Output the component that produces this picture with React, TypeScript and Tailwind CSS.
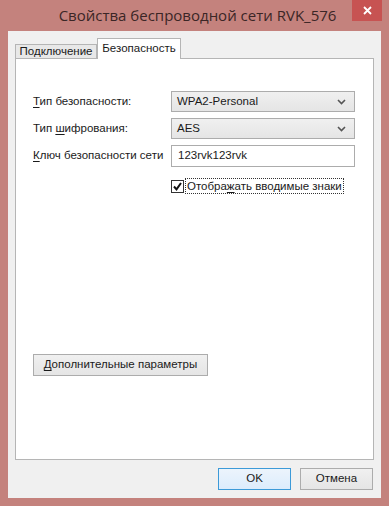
import { Fragment } from "react"

const font = { fontFamily: '"Liberation Sans", Arial, sans-serif' }

const Chevron = () => (
  <svg width="9" height="6" viewBox="0 0 9 6" className="shrink-0">
    <path d="M1 1l3.5 3.5L8 1" fill="none" stroke="#555" strokeWidth="1.6" />
  </svg>
)

const Select = ({ value }: { value: string }) => (
  <div className="flex h-[21px] w-[184px] items-center justify-between border border-[#acacac] bg-gradient-to-b from-[#f0f0f0] to-[#e5e5e5] pl-[5px] pr-[8px] text-[11.5px] text-[#1a1a1a]">
    <span>{value}</span>
    <Chevron />
  </div>
)

const Row = ({ label, children }: { label: [string, string, string]; children: React.ReactNode }) => (
  <div className="flex items-center">
    <div className="w-[138px] whitespace-nowrap text-[11.5px] text-[#1a1a1a]">
      {label[0]}
      <span className="underline underline-offset-2">{label[1]}</span>
      {label[2]}
    </div>
    {children}
  </div>
)

export default function App() {
  return (
    <div style={font} className="flex h-[506px] w-[389px] flex-col bg-[#c4827d]">
      {/* title bar */}
      <div className="relative flex h-[31px] shrink-0 items-center justify-center">
        <span className="whitespace-nowrap pl-[6px] text-[#3b2626]" style={{ fontFamily: '"Open Sans", sans-serif', fontSize: 15 }}>
          Свойства беспроводной сети RVK_576
        </span>
        <div className="absolute right-[7px] top-0 flex h-[21px] w-[30px] items-center justify-center bg-[#c75352]">
          <svg width="9" height="9" viewBox="0 0 9 9">
            <path d="M1 1l7 7M8 1l-7 7" stroke="#fff" strokeWidth="1.8" />
          </svg>
        </div>
      </div>

      {/* client */}
      <div className="mx-[8px] mb-[8px] flex flex-1 flex-col bg-[#f0f0f0] px-[7px]">
        {/* tabs */}
        <div className="mt-[7px] flex h-[20px] items-end">
          <div className="flex h-[14px] w-[82px] items-center justify-center whitespace-nowrap border border-b-0 border-[#b5b5b5] bg-[#e8e8e8] text-[11.5px] leading-none text-[#1a1a1a]">
            Подключение
          </div>
          <div className="relative z-10 -mb-px flex h-[21px] w-[84px] items-start justify-center whitespace-nowrap border border-b-0 border-[#b5b5b5] bg-white pt-[2px] text-[11.5px] leading-[14px] text-[#1a1a1a]">
            Безопасность
          </div>
        </div>

        {/* panel */}
        <div className="flex h-[402px] flex-col border border-[#b5b5b5] bg-white pl-[17px] pr-[17px] pt-[32px]">
          <div className="flex flex-col gap-[6px]">
            <Row label={["", "Т", "ип безопасности:"]}>
              <Select value="WPA2-Personal" />
            </Row>
            <Row label={["Тип ", "ш", "ифрования:"]}>
              <Select value="AES" />
            </Row>
            <Row label={["", "К", "люч безопасности сети"]}>
              <div className="flex h-[22px] w-[184px] items-center border border-[#acacac] bg-white pl-[6px] text-[11.5px] text-[#1a1a1a]">
                123rvk123rvk
              </div>
            </Row>
          </div>
          <div className="ml-[138px] mt-[11px] flex items-center gap-[1px]">
            <div className="flex h-[13px] w-[13px] shrink-0 items-center justify-center border border-[#333] bg-white">
              <svg width="9" height="9" viewBox="0 0 9 9">
                <path d="M1 4.5l2.5 2.8L8 1" fill="none" stroke="#111" strokeWidth="2" />
              </svg>
            </div>
            <span className="whitespace-nowrap border border-dotted border-[#333] px-[1px] text-[11.5px] leading-[14px] text-[#1a1a1a]">
              Отобра<span className="underline underline-offset-2">ж</span>ать вводимые знаки
            </span>
          </div>

          <div className="mt-auto mb-[83px] flex">
            <div className="flex h-[22px] w-[175px] items-center justify-center whitespace-nowrap border border-[#acacac] bg-gradient-to-b from-[#f0f0f0] to-[#e5e5e5] text-[11.5px] text-[#1a1a1a]">
              <Fragment>
                <span className="underline underline-offset-2">Д</span>ополнительные параметры
              </Fragment>
            </div>
          </div>
        </div>

        {/* buttons */}
        <div className="mt-[8px] flex justify-end gap-[9px] pr-[1px]">
          <div className="flex h-[22px] w-[73px] items-center justify-center border border-[#3c9ad8] bg-gradient-to-b from-[#ecf4fc] to-[#dcecfc] text-[11.5px] text-[#1a1a1a]">
            OK
          </div>
          <div className="flex h-[22px] w-[73px] items-center justify-center border border-[#acacac] bg-gradient-to-b from-[#f0f0f0] to-[#e5e5e5] text-[11.5px] text-[#1a1a1a]">
            Отмена
          </div>
        </div>
      </div>
    </div>
  )
}
